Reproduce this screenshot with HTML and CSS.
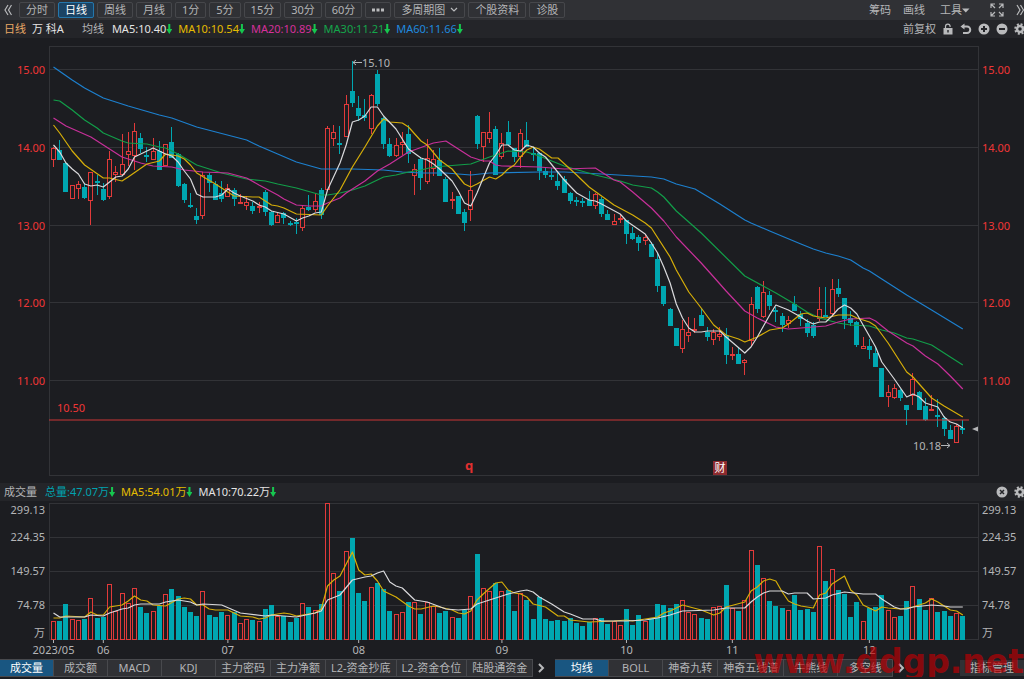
FILE: index.html
```html
<!DOCTYPE html>
<html lang="zh-CN">
<head>
    <meta charset="UTF-8">
    <meta name="viewport" content="width=device-width, initial-scale=1.0">
    <title>万科A 日线</title>
    <link rel="stylesheet" href="styles.css">
</head>
<body>

    <!-- 周期工具栏 -->
    <div class="toolbar">
        <button class="icon-btn" aria-label="收起">
            <svg width="8" height="12" viewBox="0 0 8 12"><path d="M4 1L1 6l3 5M7.500 1l-3 5 3 5"/></svg>
        </button>
        <div class="periods">
            <button>分时</button>
            <button class="active">日线</button>
            <button>周线</button>
            <button>月线</button>
            <button>1分</button>
            <button>5分</button>
            <button>15分</button>
            <button>30分</button>
            <button>60分</button>
            <button aria-label="更多"><svg width="12" height="4" viewBox="0 0 12 4"><path class="fill" d="M0 .5h3v3H0zM4.500 .5h3v3h-3zM9 .5h3v3H9z"/></svg></button>
            <button>多周期图<svg class="down" width="8" height="6" viewBox="0 0 8 6"><path d="M1 1l3 3 3-3"/></svg></button>
            <button>个股资料</button>
            <button>诊股</button>
        </div>
        <div class="tools">
            <button>筹码</button>
            <button>画线</button>
            <button class="more">工具<svg width="8" height="5" viewBox="0 0 8 5"><path class="fill" d="M0 .5h7.500L3.800 4.500z"/></svg></button>
            <button aria-label="全屏" class="full">
                <svg width="14" height="14" viewBox="0 0 14 14"><path d="M1 5V1h4M1 1l4 4M9 1h4v4M13 1L9 5M1 9v4h4M1 13l4-4M13 9v4H9M13 13L9 9"/></svg>
            </button>
            <button aria-label="展开"><svg width="8" height="12" viewBox="0 0 8 12"><path d="M1 1l3 5-3 5M4.500 1l3 5-3 5"/></svg></button>
        </div>
    </div>

    <!-- 均线数值 -->
    <div class="info">
        <span class="orange">日线</span>
        <span class="name">万 科A</span>
        <span class="label">均线</span>
        <span class="ma white">MA5:10.40<i class="arrow"></i></span>
        <span class="ma yellow">MA10:10.54<i class="arrow"></i></span>
        <span class="ma pink">MA20:10.89<i class="arrow"></i></span>
        <span class="ma green">MA30:11.21<i class="arrow"></i></span>
        <span class="ma blue">MA60:11.66<i class="arrow"></i></span>
        <div class="info-right">
            <button>前复权</button>
            <button aria-label="锁定"><svg width="12" height="12" viewBox="0 0 12 12"><path d="M3.500 5V3.500a2.300 2.300 0 0 1 4.600 0V4"/><path class="fill" fill-rule="evenodd" d="M1.500 5h9v6.500h-9zM5.300 7v2.500h1.400V7z"/></svg></button>
            <button aria-label="撤销"><svg width="12" height="12" viewBox="0 0 12 12"><path class="thick" d="M2 3.500h5a3.200 3.200 0 0 1 0 6.500H3"/><path class="fill" d="M0.500 3.500L4.500 .5v6z"/></svg></button>
            <button aria-label="放大"><svg width="12" height="12" viewBox="0 0 12 12"><circle class="fill" cx="6" cy="6" r="5.500"/><path class="cut" d="M3 6h6M6 3v6"/></svg></button>
            <button aria-label="缩小"><svg width="12" height="12" viewBox="0 0 12 12"><circle class="fill" cx="6" cy="6" r="5.500"/><path class="cut" d="M3 6h6"/></svg></button>
            <button aria-label="设置" class="gear"><svg width="12" height="12" viewBox="0 0 12 12"><circle class="teeth" cx="6" cy="6" r="4.800"/><circle class="ring" cx="6" cy="6" r="3"/></svg></button>
        </div>
    </div>

    <!-- K线图 -->
    <svg class="chart" id="price" viewBox="0 38 1024 445" role="img" aria-label="K线图"></svg>

    <!-- 成交量 -->
    <div class="info volume-info">
        <span class="label">成交量</span>
        <span class="ma teal">总量:47.07万<i class="arrow"></i></span>
        <span class="ma yellow">MA5:54.01万<i class="arrow"></i></span>
        <span class="ma white">MA10:70.22万<i class="arrow"></i></span>
        <div class="info-right">
            <button aria-label="关闭"><svg width="12" height="12" viewBox="0 0 12 12"><circle class="fill" cx="6" cy="6" r="5.500"/><path class="cut thin" d="M4 4l4 4M8 4L4 8"/></svg></button>
            <button aria-label="设置" class="gear"><svg width="12" height="12" viewBox="0 0 12 12"><circle class="teeth" cx="6" cy="6" r="4.800"/><circle class="ring" cx="6" cy="6" r="3"/></svg></button>
        </div>
    </div>
    <svg class="chart" id="volume" viewBox="0 501 1024 158" role="img" aria-label="成交量图"></svg>

    <!-- 指标切换 -->
    <div class="bottom">
        <div class="tabs">
            <button class="active">成交量</button>
            <button>成交额</button>
            <button>MACD</button>
            <button>KDJ</button>
            <button>主力密码</button>
            <button>主力净额</button>
            <button>L2-资金抄底</button>
            <button>L2-资金仓位</button>
            <button>陆股通资金</button>
        </div>
        <button class="next" aria-label="更多指标"><svg width="8" height="10" viewBox="0 0 8 10"><path class="thick" d="M2 1l4 4-4 4"/></svg></button>
        <div class="tabs">
            <button class="active">均线</button>
            <button>BOLL</button>
            <button>神奇九转</button>
            <button>神奇五线谱</button>
            <button>牛熊线</button>
            <button>多空线</button>
        </div>
        <button class="next" aria-label="更多主图指标"><svg width="8" height="10" viewBox="0 0 8 10"><path class="thick" d="M2 1l4 4-4 4"/></svg></button>
        <button class="manage">指标管理</button>
        <div class="watermark">www.ddgp.net</div>
    </div>

    <script src="script.js"></script>
</body>
</html>
```
FILE: styles.css
```css
*{
    box-sizing: border-box;
}

body{
    margin: 0;
    background-color: #1c1d21;
    color: #b4b5b7;
    font-family: "Noto Sans", "Noto Sans CJK SC", sans-serif;
    font-size: 11px;
    line-height: 16px;
    overflow: hidden;
}

button{
    margin: 0;
    padding: 0;
    border: 0;
    background: none;
    color: inherit;
    font: inherit;
    white-space: nowrap;
    cursor: pointer;
}

button svg{
    fill: none;
    stroke: #b9babc;
    stroke-width: 1.2;
}

button .fill{
    fill: #b9babc;
    stroke: none;
}

button .thick{
    stroke-width: 2;
}

button .cut{
    stroke: #242529;
    stroke-width: 2;
}

button .thin{
    stroke-width: 1.5;
}

.teeth{
    stroke-width: 2;
    stroke-dasharray: 2 1.77;
}

.ring{
    stroke-width: 2.5;
}

/* 顶部工具栏 */
.toolbar{
    display: flex;
    align-items: center;
    height: 20px;
    background-color: #303135;
}

.icon-btn{
    width: 19px;
    height: 16px;
    padding-right: 4px;
}

.toolbar button, .info button, .next{
    display: flex;
    align-items: center;
    justify-content: center;
}

.periods{
    display: flex;
    gap: 3px;
}

.periods button{
    height: 16px;
    padding: 0 6px;
    border: 1px solid #46474b;
    border-radius: 2px;
    line-height: 14px;
}

.periods .active{
    background-color: #1a4364;
    border-color: #2477ac;
    color: #fff;
}

.periods .down{
    margin-left: 5px;
}

.tools{
    display: flex;
    align-items: center;
    gap: 12px;
    margin-left: auto;
}

.tools .more{
    margin: 0 4px 0 3px;
}

.tools .full{
    margin: 0 0 0 4px;
}

/* 数值行 */
.info{
    display: flex;
    align-items: center;
    height: 18px;
    padding-left: 4px;
    background-color: #242529;
}

.ma{
    display: flex;
    align-items: center;
    margin-right: 6px;
}

.name{
    margin: 0 18px 0 6px;
    color: #e4e4e4;
}

.label{
    margin-right: 8px;
}

.arrow{
    width: 6px;
    height: 10px;
    background-color: #16c74f;
    clip-path: polygon(33% 0, 67% 0, 67% 50%, 100% 50%, 50% 100%, 0 50%, 33% 50%);
}

.orange{ color: #e8a866; }
.white{ color: #e4e4e4; }
.yellow{ color: #e5bc00; }
.pink{ color: #d6309b; }
.green{ color: #14a64b; }
.blue{ color: #2089df; }
.teal{ color: #00a3af; }

.info-right{
    display: flex;
    align-items: center;
    gap: 6px;
    margin-left: auto;
}

.info .gear{
    margin-right: -2px;
}

/* 图表 */
.chart{
    display: block;
    width: 100%;
    height: auto;
    font-size: 11px;
    fill: #b4b5b7;
}

.frame{
    fill: none;
    stroke: #323337;
    stroke-width: 1;
}

.axis-price{
    fill: #f03636;
}

.end{
    text-anchor: end;
}

.middle{
    text-anchor: middle;
}

.up{
    fill: #1c1d21;
    stroke: #e23a3a;
}

.drop{
    fill: #00a7b1;
    stroke: #00a7b1;
}

.line{
    fill: none;
    stroke-width: 1.2;
    stroke-linejoin: round;
}

.l5{ stroke: #d9d9dc; }
.l10{ stroke: #d6ae09; }
.l20{ stroke: #c8309a; }
.l30{ stroke: #129e49; }
.l60{ stroke: #1d80cf; }

.limit{
    stroke: #c93636;
    stroke-width: 1.2;
}

.tick{
    stroke: #b4b5b7;
}

.note{
    fill: none;
    stroke: #b4b5b7;
}

.mark-q{
    fill: #e03030;
    font-size: 13px;
    font-weight: bold;
}

.badge{
    fill: #8c2a2e;
}

.badge-text{
    fill: #fff;
}

/* 底部 */
.bottom{
    position: relative;
    display: flex;
    align-items: center;
    height: 18px;
}

.tabs{
    display: flex;
    border: 1px solid #48494d;
    border-left: 0;
}

.tabs button{
    min-width: 54px;
    height: 16px;
    padding: 0 5px;
    border-right: 1px solid #48494d;
    background-color: #303135;
}

.tabs button:last-child{
    border-right: 0;
}

.tabs .active{
    background-color: #195681;
    color: #fff;
}

.next{
    width: 16px;
    height: 16px;
    margin-right: 6px;
}

.manage{
    margin-left: auto;
    padding: 0 10px;
    background-color: #303135;
}

.watermark{
    position: absolute;
    right: 0;
    bottom: -4px;
    color: rgba(190, 0, 4, 0.68);
    font-family: "DejaVu Sans", sans-serif;
    font-size: 33px;
    font-weight: bold;
    line-height: 38px;
    pointer-events: none;
}
```
FILE: script.js
```js
// 每根K线: 涨跌(1涨 0跌), 最高, 实体上沿, 实体下沿, 最低, 成交量柱顶
const bars = [
    [1,147,148,160,167,621],[0,140,150,160,160,621],[0,162,163,192,192,604],[1,185,185,199,199,619],[1,181,184,189,199,620],
    [0,183,187,198,199,619],[1,172,172,201,225,598],[0,175,181,182,195,618],[0,183,189,200,201,617],[1,151,159,197,199,584],
    [1,166,172,175,182,611],[1,134,164,175,175,593],[1,132,151,155,166,603],[1,123,131,156,170,588],[0,133,138,149,153,607],
    [0,147,155,156,162,613],[1,138,151,160,160,611],[0,141,151,170,170,606],[1,144,144,166,166,594],[0,127,142,158,158,589],
    [0,153,154,186,187,596],[0,183,184,200,203,607],[0,193,205,206,208,612],[0,208,216,220,224,616],[1,172,175,216,219,591],
    [0,173,175,183,192,615],[0,181,184,200,200,617],[0,181,193,199,202,612],[1,184,188,197,197,615],[0,188,190,199,206,612],
    [1,194,202,203,203,623],[1,196,202,206,210,619],[0,202,206,211,214,620],[1,202,206,207,213,621],[0,190,192,212,216,609],
    [0,211,212,225,226,605],[1,212,215,223,223,616],[0,212,213,218,224,616],[0,221,223,224,226,622],[0,218,222,224,234,618],
    [1,206,208,228,231,603],[0,195,207,210,211,607],[1,193,201,210,212,610],[0,188,190,215,219,604],[1,126,128,190,190,503],
    [1,125,132,139,146,573],[0,126,143,144,154,591],[1,95,104,137,137,551],[0,61,91,103,107,538],[0,96,108,116,121,593],
    [0,99,115,118,121,601],[1,94,95,129,134,587],[0,70,74,104,106,583],[0,117,118,144,149,589],[0,138,144,156,157,611],
    [1,138,145,156,157,614],[1,132,142,145,155,612],[0,125,134,154,163,602],[1,164,169,176,195,602],[0,157,159,178,190,614],
    [1,139,158,182,184,602],[1,150,159,169,176,606],[0,148,160,176,176,613],[0,177,179,202,202,611],[1,192,199,200,209,617],
    [0,196,196,214,214,618],[0,209,212,223,231,610],[1,171,190,210,221,596],[0,115,116,144,149,554],[1,132,132,147,162,588],
    [1,112,132,139,143,591],[0,126,129,175,175,583],[1,133,143,157,159,591],[0,121,132,145,145,590],[0,148,148,157,162,611],
    [1,129,133,157,168,593],[0,122,140,147,147,600],[0,147,153,155,161,619],[0,152,153,171,180,597],[0,167,171,175,178,619],
    [0,168,175,177,180,621],[0,173,181,186,190,620],[0,176,179,193,193,621],[0,192,193,201,204,618],[0,197,200,202,206,623],
    [0,198,201,203,207,626],[0,191,200,206,206,622],[1,193,194,206,209,618],[0,197,199,214,217,618],[0,210,214,220,220,624],
    [1,214,221,225,225,621],[1,214,218,219,223,625],[0,220,220,234,244,609],[0,227,233,239,240,625],[0,235,237,243,251,615],
    [1,235,237,241,245,621],[0,242,244,257,257,618],[0,253,259,286,292,604],[0,286,286,304,306,605],[0,308,309,326,326,608],
    [0,328,328,346,346,604],[1,320,329,349,353,600],[1,317,332,336,342,612],[1,318,329,330,333,614],[0,308,315,326,326,618],
    [0,327,332,337,341,619],[1,329,332,340,345,607],[1,327,334,337,341,606],[0,328,336,355,364,585],[1,347,354,356,360,608],
    [0,348,354,364,364,611],[1,359,360,363,375,600],[1,297,304,341,346,550],[0,286,287,309,313,565],[1,281,292,317,318,578],
    [0,291,295,306,310,601],[0,307,310,311,322,606],[0,313,316,325,332,608],[1,316,320,324,328,610],[0,296,304,311,311,595],
    [0,311,314,319,326,610],[0,319,323,333,337,609],[0,322,325,336,338,612],[1,287,309,319,321,546],[0,287,315,316,316,581],
    [1,279,289,314,317,569],[0,279,288,294,297,590],[0,298,298,319,329,594],[0,311,318,323,326,617],[0,321,322,345,347,602],
    [1,337,346,349,349,621],[0,339,346,350,359,608],[0,347,353,367,367,607],[0,368,368,397,397,595],[1,385,392,397,407,610],
    [1,384,388,398,399,617],[0,389,390,398,401,616],[0,405,405,410,425,601],[1,373,379,396,405,586],[0,391,392,410,410,599],
    [0,398,406,420,421,610],[1,395,409,410,411,598],[0,399,415,417,427,612],[0,416,418,429,436,611],[0,425,430,439,439,616],
    [1,424,426,443,443,613],[0,420,428,429,434,616]
];

// 均线: K线序号, 高度
const priceLines = {
    l60: "0,67 3,80 5,88 8,98 12,106 17,115 19,118 23,127 31,140 33,146 36,154 39,162 43,169 48,169 53,170 56,172 59,173 63,173 67,175 70,173 78,172 82,172 88,174 96,177 98,179 100,184 103,189 107,204 111,220 112,223 115,231 120,244 122,249 124,253 126,256 128,260 130,268 131,271 133,279 137,295 141,310 146,329",
    l30: "0,100 1,101 3,110 5,120 7,128 8,133 11,141 12,143 15,144 17,147 18,148 20,154 23,165 27,173 31,179 34,181 36,184 39,188 43,195 44,195 46,193 48,190 50,186 53,177 55,175 57,172 59,170 61,167 65,165 67,164 70,157 73,151 76,152 78,156 82,166 87,175 91,181 93,185 96,188 97,192 98,197 100,211 104,233 111,276 116,293 119,304 121,312 123,318 126,323 128,325 131,326 133,330 135,333 137,338 138,339 141,345 144,357 146,365",
    l20: "0,118 2,126 6,137 10,153 11,157 14,163 16,166 19,167 21,170 24,172 28,173 31,178 33,185 36,195 37,199 39,205 41,206 43,206 44,203 46,198 47,193 50,181 52,171 54,164 57,152 61,143 63,141 64,145 67,157 69,161 70,161 71,165 72,166 78,167 82,169 87,168 90,180 91,182 93,192 96,208 98,221 100,237 104,263 106,277 108,291 111,311 113,318 116,327 118,329 120,328 124,326 126,322 128,319 131,318 132,321 134,331 137,343 138,346 140,356 142,364 144,376 146,389",
    l10: "0,125 1,133 3,151 5,165 8,178 9,178 11,181 12,177 15,164 17,161 18,154 20,156 21,159 22,165 23,173 26,184 29,196 32,197 33,197 35,205 36,206 37,208 39,214 43,215 44,206 46,190 48,167 50,147 52,126 53,119 54,122 56,123 57,127 59,141 60,145 62,160 64,169 66,184 67,187 68,184 70,177 71,179 72,175 73,169 74,165 75,157 76,150 77,147 78,149 80,158 81,158 84,175 86,187 90,205 93,215 95,223 96,228 99,257 100,270 102,292 104,308 106,325 108,335 110,339 111,342 113,337 115,330 117,328 118,324 120,314 121,313 122,316 124,318 126,315 128,315 129,318 131,322 132,326 134,343 137,372 138,377 141,398 143,406 146,417",
    l5: "0,145 1,152 2,163 3,169 4,174 5,184 6,186 7,185 8,187 9,182 10,177 11,176 12,169 13,157 14,154 15,151 16,148 17,151 18,154 19,156 20,162 21,171 22,179 23,194 24,197 26,197 27,195 28,189 29,193 30,196 32,201 33,205 34,207 35,211 37,214 39,221 40,218 41,216 42,213 43,212 44,190 46,163 47,145 48,122 49,120 50,116 51,107 52,107 53,116 55,129 57,149 59,158 60,160 61,164 62,169 63,175 64,181 65,191 66,203 67,206 68,193 69,178 70,163 71,155 72,145 73,145 74,150 75,151 76,145 77,147 78,153 79,157 82,180 84,193 86,200 87,201 88,204 91,214 92,221 95,234 96,243 97,253 98,267 99,283 100,304 101,318 102,328 103,332 104,332 105,331 107,331 108,337 111,353 112,347 113,337 114,326 115,315 116,305 118,310 120,317 121,321 122,324 123,322 124,322 125,316 126,309 127,305 128,308 129,314 130,325 132,347 133,362 135,379 137,397 138,394 139,397 140,403 142,407 143,417 144,422 145,424 146,428"
};

const volumeLines = {
    l10: "0,618 1,618 2,616 5,617 6,612 7,615 8,615 9,607 11,605 12,601 13,596 14,600 15,601 16,605 18,606 20,599 21,598 22,599 23,605 24,605 25,609 26,610 28,610 30,616 32,617 33,619 34,618 35,615 37,613 38,614 39,616 40,615 42,613 43,609 44,586 45,580 46,576 48,552 49,570 50,575 51,574 52,581 53,591 55,597 57,606 58,609 59,609 61,606 62,607 64,610 65,613 66,614 67,611 68,600 69,594 71,583 72,582 73,590 74,593 75,594 76,597 77,604 79,607 81,616 82,616 83,620 86,622 90,621 92,620 93,621 95,619 97,617 98,613 99,611 101,605 104,610 106,615 107,613 108,607 111,602 112,591 113,587 114,581 115,579 116,581 117,592 118,601 119,604 120,606 122,608 123,595 124,593 125,584 127,576 128,590 129,595 130,605 132,611 133,607 134,608 136,609 138,607 140,603 141,599 142,602 143,606 144,610 145,611 146,615",
    l5: "0,613 1,617 5,617 6,615 8,616 9,613 11,609 12,608 13,605 14,604 17,604 18,602 20,600 22,602 23,605 24,604 27,605 30,613 34,616 35,615 39,617 42,613 43,611 44,600 46,595 48,580 50,577 51,576 52,573 53,571 54,582 55,586 56,588 58,600 60,602 63,609 65,610 67,609 68,604 69,602 71,598 73,594 75,591 76,590 77,592 78,597 80,604 82,612 83,614 85,619 87,619 88,621 92,621 95,620 97,618 99,615 101,611 106,610 108,608 111,608 112,602 113,597 114,593 115,591 117,591 118,594 119,593 121,593 122,599 124,598 125,595 127,592 130,594 132,594 133,599 135,607 136,609 137,609 138,607 141,605 143,606 144,607 146,607"
};

function getX(i){
    return 53.5 + i * 6.228;
}

function drawLines(lines){
    let str = "";
    for(let name in lines){
        let points = lines[name].split(" ").map(function(p){
            let [i, y] = p.split(",");
            return getX(Number(i)).toFixed(1) + "," + y;
        });
        str += `<polyline class="line ${name}" points="${points.join(" ")}"/>`;
    }
    return str;
}

function drawPrice(){
    let str = '<rect class="frame" x="49.5" y="46.500" width="929" height="429"/>';
    ["15.00", "14.00", "13.00", "12.00", "11.00"].forEach(function(text, i){
        let y = Math.round(70 + i * 77.75);
        str += `<path class="frame" d="M49 ${y - 0.5}H979"/>`;
        str += `<text class="axis-price end" x="45" y="${y + 4}">${text}</text>`;
        str += `<text class="axis-price" x="982" y="${y + 4}">${text}</text>`;
    });

    bars.forEach(function([up, high, top, bottom, low], i){
        let x = Math.round(getX(i) - 0.5) + 0.5;
        let height = Math.max(bottom - top - 1, 1);
        str += `<g class="${up ? "up" : "drop"}"><path d="M${x} ${high}V${low}"/>`;
        str += `<rect x="${x - 2}" y="${top + 0.5}" width="4" height="${height}"/></g>`;
    });
    str += drawLines(priceLines);

    // 价格提示线
    str += '<path class="limit" d="M49 420H969"/><text class="axis-price" x="57" y="412">10.50</text>';
    // 最高价 最低价
    str += '<path class="note" d="M353 62.500h9M356 60l-3 2.500 3 2.500"/><text x="362" y="67">15.10</text>';
    str += '<text class="end" x="941" y="450">10.18</text><path class="note" d="M941 445.500h9M947 443l3 2.500-3 2.500"/>';
    str += '<path d="M972 429l6-2.500v5z"/>';
    // 事件标记
    str += '<text class="mark-q middle" x="469" y="470">q</text>';
    str += '<rect class="badge" x="713" y="461" width="14" height="14"/><text class="badge-text middle" x="720" y="472">财</text>';
    document.querySelector("#price").innerHTML = str;
}

function drawVolume(){
    let str = '<rect class="frame" x="49.5" y="503.500" width="929" height="136"/>';
    [["299.13", 503, 514], ["224.35", 537, 541], ["149.57", 571, 575], ["74.78", 605, 609], ["万", 639, 637]].forEach(function([text, y, textY]){
        str += `<path class="frame" d="M49 ${y + 0.5}H979"/>`;
        str += `<text class="end" x="45" y="${textY}">${text}</text><text x="982" y="${textY}">${text}</text>`;
    });

    bars.forEach(function(bar, i){
        let x = Math.round(getX(i) - 0.5) + 0.5;
        let top = bar[5];
        str += `<rect class="${bar[0] ? "up" : "drop"}" x="${x - 2}" y="${top + 0.5}" width="4" height="${639 - top}"/>`;
    });
    str += drawLines(volumeLines);

    [["2023/05", 0], ["06", 8], ["07", 28], ["08", 49], ["09", 72], ["10", 92], ["11", 109], ["12", 131]].forEach(function([text, i]){
        let x = getX(i);
        str += `<path class="tick" d="M${x} 640v3"/><text class="middle" x="${x}" y="654">${text}</text>`;
    });
    document.querySelector("#volume").innerHTML = str;
}

drawPrice();
drawVolume();
```
